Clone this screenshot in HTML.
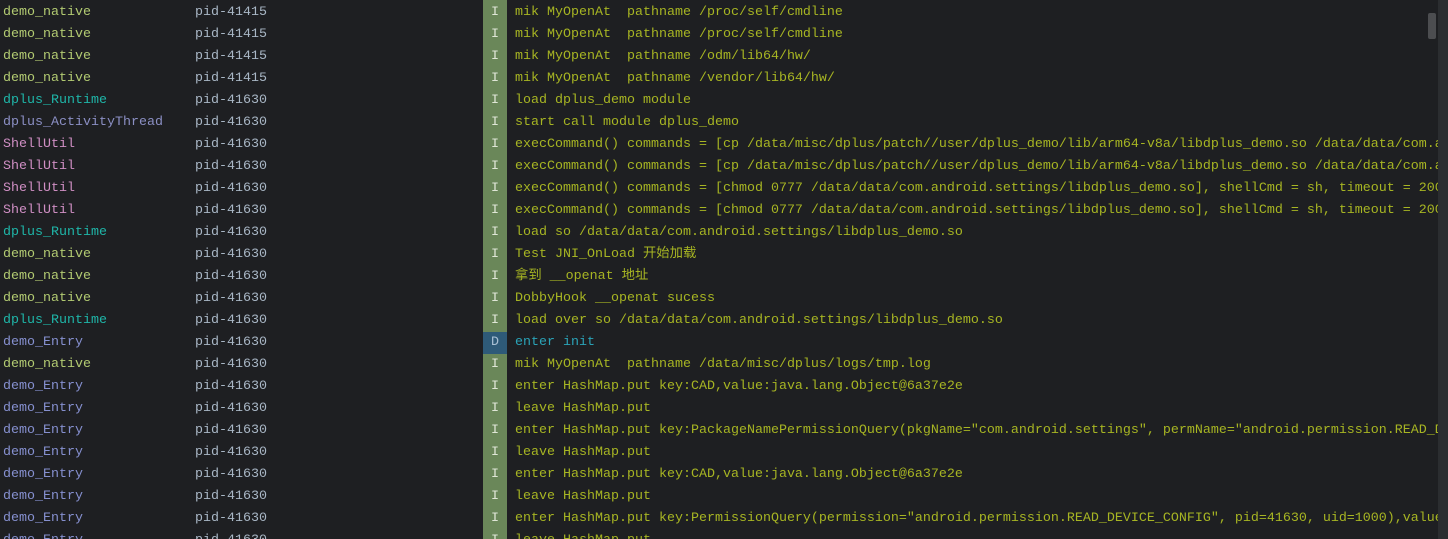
<!DOCTYPE html><html><head><meta charset="utf-8"><style>
html{overflow:hidden;height:539px}
body{margin:0;background:#1e1f22;width:1448px;height:539px;overflow:hidden;font-family:"Liberation Mono","Noto Sans CJK SC",monospace;font-size:13.33px;position:relative}
.r{position:absolute;left:0;height:22px;line-height:22px;white-space:pre;width:1438px}
.t{position:absolute;left:3px}
.p{position:absolute;left:195px;color:#a9b7c6}
.l{position:absolute;left:483px;width:24px;text-align:center;background:#6a8759;color:#dfe6d6}
.l.d{background:#2e5a78;color:#a9c0d4}
.m{position:absolute;left:515px;color:#a7b523}
.m.d{color:#2aa3b8}
.n{color:#b3cb72}.rt{color:#1fb5a8}.a{color:#8b8fc4}.s{color:#d08fc4}.e{color:#8690d0}
.sb{position:absolute;right:0;top:0;width:10px;height:539px;background:#2b2d30}
.th{position:absolute;left:1428px;top:13px;width:8px;height:26px;background:#4c4d50;border-radius:2px}
.w{position:absolute;left:0;top:2px;width:1448px;height:537px;overflow:hidden}
.lc{position:absolute;left:483px;top:0;width:24px;height:539px;background:#6a8759}
</style></head><body>
<div class="lc"></div>
<div class="w">
<div class="r" style="top:0px"><span class="t n">demo_native</span><span class="p">pid-41415</span><span class="l">I</span><span class="m">mik MyOpenAt  pathname /proc/self/cmdline</span></div>
<div class="r" style="top:22px"><span class="t n">demo_native</span><span class="p">pid-41415</span><span class="l">I</span><span class="m">mik MyOpenAt  pathname /proc/self/cmdline</span></div>
<div class="r" style="top:44px"><span class="t n">demo_native</span><span class="p">pid-41415</span><span class="l">I</span><span class="m">mik MyOpenAt  pathname /odm/lib64/hw/</span></div>
<div class="r" style="top:66px"><span class="t n">demo_native</span><span class="p">pid-41415</span><span class="l">I</span><span class="m">mik MyOpenAt  pathname /vendor/lib64/hw/</span></div>
<div class="r" style="top:88px"><span class="t rt">dplus_Runtime</span><span class="p">pid-41630</span><span class="l">I</span><span class="m">load dplus_demo module</span></div>
<div class="r" style="top:110px"><span class="t a">dplus_ActivityThread</span><span class="p">pid-41630</span><span class="l">I</span><span class="m">start call module dplus_demo</span></div>
<div class="r" style="top:132px"><span class="t s">ShellUtil</span><span class="p">pid-41630</span><span class="l">I</span><span class="m">execCommand() commands = [cp /data/misc/dplus/patch//user/dplus_demo/lib/arm64-v8a/libdplus_demo.so /data/data/com.android</span></div>
<div class="r" style="top:154px"><span class="t s">ShellUtil</span><span class="p">pid-41630</span><span class="l">I</span><span class="m">execCommand() commands = [cp /data/misc/dplus/patch//user/dplus_demo/lib/arm64-v8a/libdplus_demo.so /data/data/com.android</span></div>
<div class="r" style="top:176px"><span class="t s">ShellUtil</span><span class="p">pid-41630</span><span class="l">I</span><span class="m">execCommand() commands = [chmod 0777 /data/data/com.android.settings/libdplus_demo.so], shellCmd = sh, timeout = 2000</span></div>
<div class="r" style="top:198px"><span class="t s">ShellUtil</span><span class="p">pid-41630</span><span class="l">I</span><span class="m">execCommand() commands = [chmod 0777 /data/data/com.android.settings/libdplus_demo.so], shellCmd = sh, timeout = 2000</span></div>
<div class="r" style="top:220px"><span class="t rt">dplus_Runtime</span><span class="p">pid-41630</span><span class="l">I</span><span class="m">load so /data/data/com.android.settings/libdplus_demo.so</span></div>
<div class="r" style="top:242px"><span class="t n">demo_native</span><span class="p">pid-41630</span><span class="l">I</span><span class="m">Test JNI_OnLoad 开始加载</span></div>
<div class="r" style="top:264px"><span class="t n">demo_native</span><span class="p">pid-41630</span><span class="l">I</span><span class="m">拿到 __openat 地址</span></div>
<div class="r" style="top:286px"><span class="t n">demo_native</span><span class="p">pid-41630</span><span class="l">I</span><span class="m">DobbyHook __openat sucess</span></div>
<div class="r" style="top:308px"><span class="t rt">dplus_Runtime</span><span class="p">pid-41630</span><span class="l">I</span><span class="m">load over so /data/data/com.android.settings/libdplus_demo.so</span></div>
<div class="r" style="top:330px"><span class="t e">demo_Entry</span><span class="p">pid-41630</span><span class="l d">D</span><span class="m d">enter init</span></div>
<div class="r" style="top:352px"><span class="t n">demo_native</span><span class="p">pid-41630</span><span class="l">I</span><span class="m">mik MyOpenAt  pathname /data/misc/dplus/logs/tmp.log</span></div>
<div class="r" style="top:374px"><span class="t e">demo_Entry</span><span class="p">pid-41630</span><span class="l">I</span><span class="m">enter HashMap.put key:CAD,value:java.lang.Object@6a37e2e</span></div>
<div class="r" style="top:396px"><span class="t e">demo_Entry</span><span class="p">pid-41630</span><span class="l">I</span><span class="m">leave HashMap.put</span></div>
<div class="r" style="top:418px"><span class="t e">demo_Entry</span><span class="p">pid-41630</span><span class="l">I</span><span class="m">enter HashMap.put key:PackageNamePermissionQuery(pkgName="com.android.settings", permName="android.permission.READ_DEVICE</span></div>
<div class="r" style="top:440px"><span class="t e">demo_Entry</span><span class="p">pid-41630</span><span class="l">I</span><span class="m">leave HashMap.put</span></div>
<div class="r" style="top:462px"><span class="t e">demo_Entry</span><span class="p">pid-41630</span><span class="l">I</span><span class="m">enter HashMap.put key:CAD,value:java.lang.Object@6a37e2e</span></div>
<div class="r" style="top:484px"><span class="t e">demo_Entry</span><span class="p">pid-41630</span><span class="l">I</span><span class="m">leave HashMap.put</span></div>
<div class="r" style="top:506px"><span class="t e">demo_Entry</span><span class="p">pid-41630</span><span class="l">I</span><span class="m">enter HashMap.put key:PermissionQuery(permission="android.permission.READ_DEVICE_CONFIG", pid=41630, uid=1000),value</span></div>
<div class="r" style="top:528px"><span class="t e">demo_Entry</span><span class="p">pid-41630</span><span class="l">I</span><span class="m">leave HashMap.put</span></div>
</div>
<div class="sb"></div><div class="th"></div>
</body></html>
